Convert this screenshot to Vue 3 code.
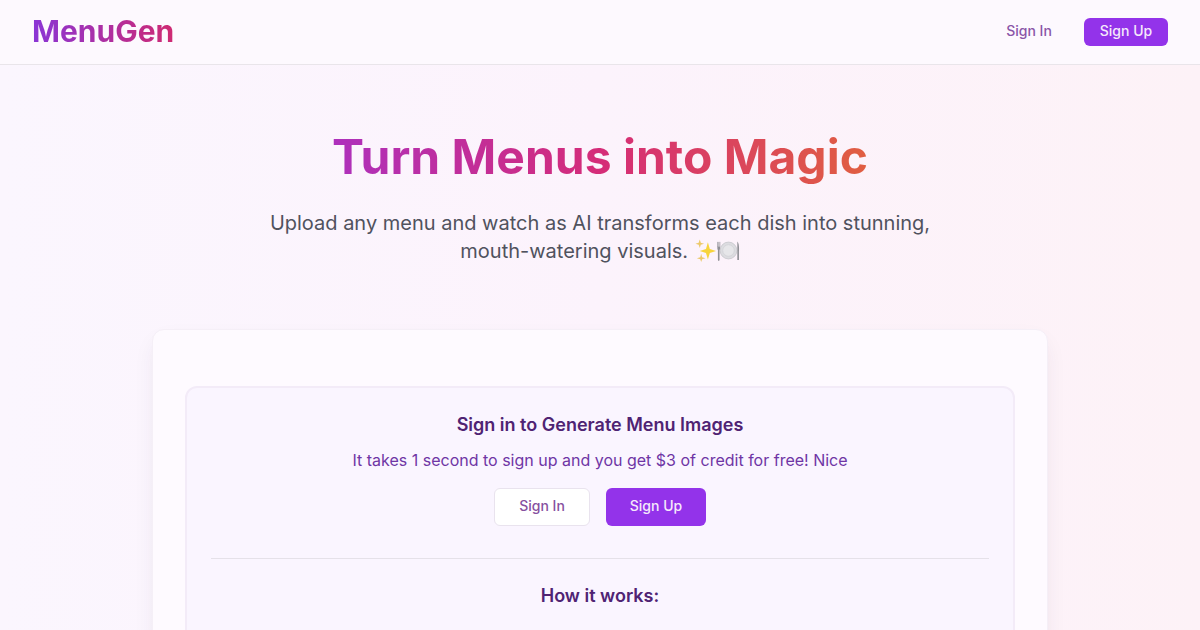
<script setup>
const steps = []
</script>

<template>
  <div class="page">
    <header class="topbar">
      <span class="logo">MenuGen</span>
      <nav class="nav">
        <button class="btn ghost">Sign In</button>
        <button class="btn primary small">Sign Up</button>
      </nav>
    </header>
    <main class="main">
      <section class="hero">
        <h1 class="title">Turn Menus into Magic</h1>
        <p class="lead">
          Upload any menu and watch as AI transforms each dish into stunning,<br />
          mouth-watering visuals.
          <span class="emoji" role="img" aria-label="sparkles and plate">
            <svg class="glyph" viewBox="0 0 24 24" width="23" height="23">
              <path fill="#f7d43c" d="M14.5 3.5 L16.5 10.5 L23 12.5 L16.5 14.5 L14.5 21.5 L12.5 14.5 L6 12.5 L12.5 10.5 Z" />
              <path fill="#ecc96a" d="M6 0.5 L7.1 4 L10.5 5 L7.1 6 L6 9.5 L4.9 6 L1.5 5 L4.9 4 Z" />
              <path fill="#ecc96a" d="M7.5 15.5 L8.5 19 L12 20 L8.5 21 L7.5 24 L6.5 21 L3 20 L6.5 19 Z" />
            </svg>
            <svg class="glyph" viewBox="0 0 24 24" width="23" height="23">
              <circle cx="12" cy="12" r="8.8" fill="#dcdce0" stroke="#c6c6cb" stroke-width="0.8" />
              <circle cx="12" cy="12" r="6" fill="#e6e6e9" stroke="#cdcdd2" stroke-width="0.6" />
              <path fill="none" stroke="#8f8f95" stroke-width="1.7" stroke-linecap="round" d="M1.8 10.5 V22" />
              <path fill="none" stroke="#8f8f95" stroke-width="0.7" d="M0.6 3 V8.5 M1.8 3 V8.5 M3 3 V8.5" />
              <path fill="#8f8f95" d="M0.4 8 H3.2 V11 H0.4 Z" />
              <path fill="#8f8f95" d="M21.2 2.5 C23 4 23.2 9 22.9 13 L22.9 22 H21.2 Z" />
            </svg>
          </span>
        </p>
      </section>
      <section class="card">
        <div class="panel">
          <h3 class="panel-title">Sign in to Generate Menu Images</h3>
          <p class="panel-text">It takes 1 second to sign up and you get $3 of credit for free! Nice</p>
          <div class="actions">
            <button class="btn outline">Sign In</button>
            <button class="btn primary large">Sign Up</button>
          </div>
          <div class="rule"></div>
          <h3 class="how">How it works:</h3>
        </div>
      </section>
    </main>
  </div>
</template>

<style>
html, body { margin: 0; height: 100%; overflow: hidden; }
</style>

<style scoped>
.page {
  height: 630px;
  overflow: hidden;
  font-family: Inter, "Liberation Sans", sans-serif;
  background: linear-gradient(90deg, #fbf6fe 0%, #fcf3fc 50%, #fdf2f7 100%);
}
.topbar {
  height: 64px;
  padding: 0 32px;
  display: flex;
  align-items: center;
  justify-content: space-between;
  background: #fdf9fe;
  border-bottom: 1px solid #e9e5ea;
}
.logo {
  font-size: 30px;
  line-height: 36px;
  font-weight: 700;
  padding-bottom: 2px;
  color: transparent;
  background: linear-gradient(90deg, #8a35d6, #cf2a72);
  -webkit-background-clip: text;
  background-clip: text;
}
.nav {
  display: flex;
  align-items: center;
  gap: 16px;
}
.btn {
  font-family: inherit;
  font-size: 14px;
  font-weight: 500;
  line-height: 20px;
  border-radius: 6px;
  border: 0;
  padding: 0 0 2px;
}
.ghost {
  width: 78px;
  height: 28px;
  background: transparent;
  color: #8a55a8;
}
.primary {
  background: #9333ea;
  color: #f5e9fb;
}
.small {
  width: 84px;
  height: 28px;
}
.main {
  display: flex;
  flex-direction: column;
  align-items: center;
}
.hero {
  width: 896px;
  padding-top: 64px;
  text-align: center;
}
.title {
  margin: 0;
  font-size: 48px;
  line-height: 56px;
  font-weight: 700;
  color: transparent;
  background: linear-gradient(90deg, #9333ea, #d52c78, #e8801c);
  -webkit-background-clip: text;
  background-clip: text;
}
.lead {
  margin: 24px 0 0;
  font-size: 20px;
  line-height: 28px;
  color: #50525e;
}
.emoji {
  display: inline-flex;
  vertical-align: -4px;
}
.glyph {
  display: block;
}
.card {
  box-sizing: border-box;
  width: 896px;
  margin-top: 64px;
  padding: 56px 32px 32px;
  background: #fefaff;
  border: 1px solid #f5eff7;
  border-radius: 12px;
  box-shadow: 0 10px 25px -5px rgba(60, 40, 80, 0.09), 0 8px 10px -6px rgba(60, 40, 80, 0.08);
}
.panel {
  padding: 23px 24px 24px;
  background: #faf5ff;
  border: 2px solid #f3ebf8;
  border-radius: 12px;
  box-sizing: border-box;
  text-align: center;
  height: 400px;
}
.panel-title {
  margin: 0;
  font-size: 18px;
  line-height: 28px;
  font-weight: 600;
  color: #4f2373;
}
.panel-text {
  margin: 9px 0 0;
  font-size: 16px;
  line-height: 24px;
  color: #6f35a5;
}
.actions {
  display: flex;
  justify-content: center;
  gap: 16px;
  margin-top: 16px;
}
.outline {
  box-sizing: border-box;
  width: 96px;
  height: 38px;
  background: #fff;
  border: 1px solid #e9e3ee;
  color: #86509f;
}
.large {
  width: 100px;
  height: 38px;
}
.rule {
  height: 1px;
  margin-top: 32px;
  background: #e5e1e9;
}
.how {
  margin: 23px 0 0;
  font-size: 18px;
  line-height: 28px;
  font-weight: 600;
  color: #4f2373;
}
</style>
